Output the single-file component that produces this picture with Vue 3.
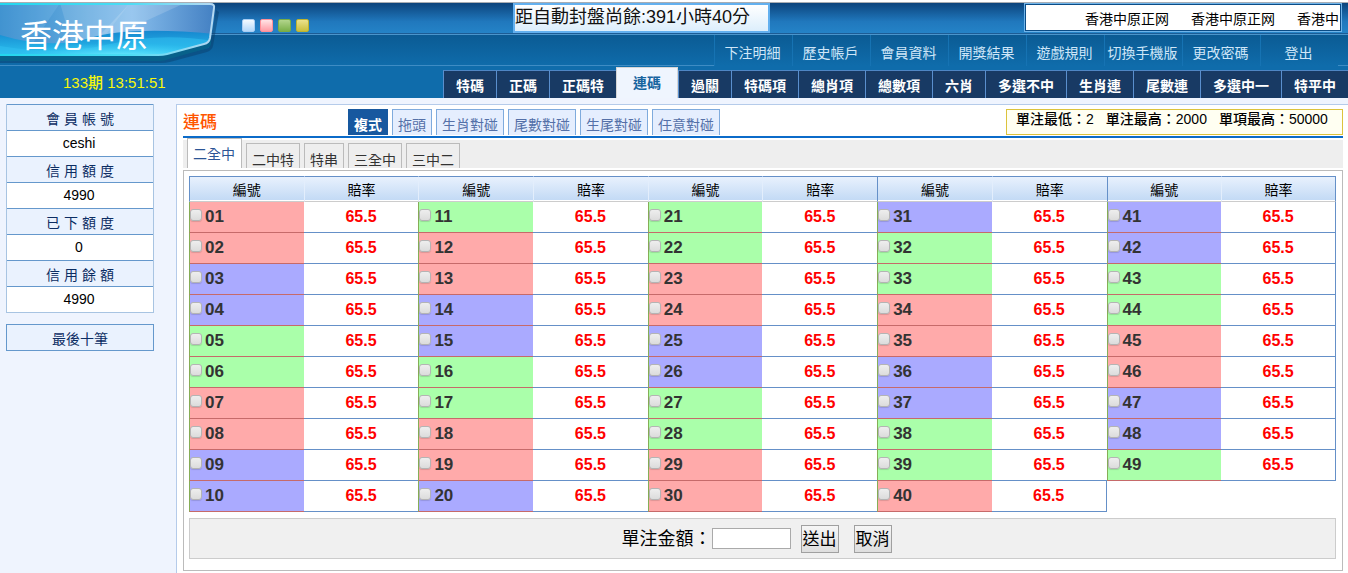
<script setup>
import { ref } from 'vue'

const swatches = ['blue', 'pink', 'green', 'yellow']
const notices = ['香港中原正网', '香港中原正网', '香港中']
const menu = ['下注明細', '歷史帳戶', '會員資料', '開獎結果', '遊戲規則', '切換手機版', '更改密碼', '登出']
const games = ['特碼', '正碼', '正碼特', '連碼', '過關', '特碼項', '總肖項', '總數項', '六肖', '多選不中', '生肖連', '尾數連', '多選中一', '特平中']
const account = [
  ['會員帳號', 'ceshi'],
  ['信用額度', '4990'],
  ['已下額度', '0'],
  ['信用餘額', '4990'],
]
const modes = ['複式', '拖頭', '生肖對碰', '尾數對碰', '生尾對碰', '任意對碰']
const kinds = ['二全中', '二中特', '特串', '三全中', '三中二']
const limits = [['單注最低', '2'], ['單注最高', '2000'], ['單項最高', '50000']]

const waves = 'rrbbggrrbb' + 'grrbbggrrb' + 'ggrrbbggrr' + 'bggrrbbggr' + 'bbggrrbbg'
const rows = Array.from({ length: 10 }, (_, r) =>
  Array.from({ length: 5 }, (_, c) => {
    const n = c * 10 + r + 1
    return n > 49 ? null : { label: String(n).padStart(2, '0'), wave: waves[n - 1], odds: '65.5' }
  })
)

const game = ref('連碼')
const mode = ref('複式')
const kind = ref('二全中')
const picked = ref([])
const amount = ref('')
function reset() {
  picked.value = []
  amount.value = ''
}
</script>

<template>
  <div class="page">
    <header>
      <div class="top-row">
        <div class="swatches">
          <button v-for="s in swatches" :key="s" type="button" :class="s" :aria-label="s"></button>
        </div>
        <div class="countdown">距自動封盤尚餘:391小時40分</div>
        <div class="notice"><span v-for="(n, i) in notices" :key="i">{{ n }}</span></div>
      </div>
      <nav class="menu-row">
        <a v-for="m in menu" :key="m" href="#">{{ m }}</a>
      </nav>
      <div class="game-row">
        <div class="period">133期 13:51:51</div>
        <nav class="games">
          <a v-for="g in games" :key="g" href="#" :class="{ active: g === game }" @click.prevent="game = g">{{ g }}</a>
        </nav>
      </div>
      <div class="logo">
        <svg width="222" height="64" viewBox="0 0 222 64" aria-hidden="true">
          <defs>
            <linearGradient id="face" x1="0" y1="0" x2="1" y2="0">
              <stop offset="0" stop-color="#2e86c8" />
              <stop offset=".35" stop-color="#62a9de" />
              <stop offset=".6" stop-color="#86bdec" />
              <stop offset="1" stop-color="#3f7cc0" />
            </linearGradient>
            <linearGradient id="wave" x1="0" y1="0" x2="0" y2="1">
              <stop offset="0" stop-color="#1688cf" />
              <stop offset="1" stop-color="#2fcdf6" />
            </linearGradient>
            <radialGradient id="glow" cx=".55" cy="1" r=".5">
              <stop offset="0" stop-color="#7ff4ff" />
              <stop offset="1" stop-color="#3fd8fa" stop-opacity="0" />
            </radialGradient>
            <linearGradient id="edge" x1="0" y1="0" x2="1" y2="0">
              <stop offset="0" stop-color="#22d6ee" />
              <stop offset=".6" stop-color="#4cdcf4" />
              <stop offset="1" stop-color="#b5d8f2" />
            </linearGradient>
            <clipPath id="plate"><path d="M0 3H210Q215 3 214 8L210 38Q209 43 204 44L167 54Q163 55 158 55H0Z" /></clipPath>
          </defs>
          <path d="M0 58H165L209 48L216 10L219 12L213 46Q212 50 207 52L170 62Q166 63 161 63H0Z" fill="#093c68" opacity=".45" />
          <path d="M0 50H160L211 38V44Q210 48 205 49L169 59Q165 61 160 61H0Z" fill="#07618a" />
          <g clip-path="url(#plate)">
            <rect width="220" height="60" fill="url(#face)" />
            <path d="M0 3H60L25 55H0Z" fill="#a9d8ff" opacity=".16" />
            <path d="M60 3H130L90 55H75Z" fill="#fff" opacity=".12" />
            <path d="M130 3H185L115 35H100Z" fill="#fff" opacity=".16" />
            <path d="M0 35Q50 50 90 38T215 34V60H0Z" fill="url(#wave)" />
            <path d="M0 46Q60 56 110 44T215 41V60H0Z" fill="#31bff0" opacity=".55" />
            <rect y="28" width="220" height="30" fill="url(#glow)" />
          </g>
          <path d="M0 4H210Q215 4 214 8L210 38Q209 43 204 44L167 54Q163 55 158 55H0" fill="none" stroke="url(#edge)" stroke-width="2" />
        </svg>
        <span>香港中原</span>
      </div>
    </header>

    <div class="body">
      <aside>
        <dl class="account">
          <template v-for="[k, v] in account" :key="k">
            <dt>{{ k }}</dt>
            <dd>{{ v }}</dd>
          </template>
        </dl>
        <a class="last-ten" href="#">最後十筆</a>
      </aside>

      <main>
        <div class="title-row">
          <h1>連碼</h1>
          <div class="modes">
            <a v-for="m in modes" :key="m" href="#" :class="{ active: m === mode }" @click.prevent="mode = m">{{ m }}</a>
          </div>
          <div class="limits">
            <span v-for="[k, v] in limits" :key="k"><b>{{ k }}：</b>{{ v }}</span>
          </div>
        </div>
        <div class="kinds">
          <a v-for="k in kinds" :key="k" href="#" :class="{ active: k === kind }" @click.prevent="kind = k">{{ k }}</a>
        </div>
        <form class="panel" @submit.prevent>
          <table>
            <thead>
              <tr>
                <template v-for="c in 5" :key="c">
                  <th scope="col">編號</th>
                  <th scope="col">賠率</th>
                </template>
              </tr>
            </thead>
            <tbody>
              <tr v-for="(row, r) in rows" :key="r">
                <template v-for="(cell, c) in row" :key="c">
                  <template v-if="cell">
                    <td class="num" :class="cell.wave">
                      <label><input v-model="picked" type="checkbox" :value="cell.label">{{ cell.label }}</label>
                    </td>
                    <td class="odds" :class="{ end: c === 4 || (c === 3 && r === 9) }">{{ cell.odds }}</td>
                  </template>
                  <td v-else colspan="2"></td>
                </template>
              </tr>
            </tbody>
          </table>
          <div class="bet">
            <label for="amount">單注金額：</label>
            <input id="amount" v-model="amount" type="text">
            <button type="submit">送出</button>
            <button type="button" @click="reset">取消</button>
          </div>
        </form>
      </main>
    </div>
  </div>
</template>

<style>
body {
  margin: 0;
  background: #eff4fe;
}
</style>

<style scoped>
.page {
  display: flex;
  flex-direction: column;
  min-height: 100vh;
  overflow: hidden;
  font: 14px/20px "Liberation Sans", "Noto Sans CJK TC", sans-serif;
  color: #000;
}
.page * {
  box-sizing: border-box;
}
a {
  text-decoration: none;
  white-space: nowrap;
}
header {
  position: relative;
  background: #0f6cab;
  border-top: 2px solid #fff;
}
.top-row {
  display: flex;
  height: 33px;
  border-top: 1px solid #a9adb3;
  border-bottom: 1px solid #4b95cc;
  box-shadow: inset 0 -1px #1c5c95;
  background: linear-gradient(#0c447c, #2078bd 60%, #2584c8);
  padding: 0 6px 0 242px;
}
.swatches {
  display: flex;
  gap: 5px;
  padding-top: 16px;
  flex: 1;
}
.swatches button {
  width: 13px;
  height: 13px;
  padding: 0;
  border-width: 1px;
  border-style: solid;
  border-radius: 2px;
}
.swatches .blue { background: linear-gradient(#f4faff, #b4d8fa); border-color: #a9cdf3; }
.swatches .pink { background: linear-gradient(#ffe4e6, #ff9ba4); border-color: #ff8f98; }
.swatches .green { background: linear-gradient(#b2d58c, #7ab04a); border-color: #79ac43; }
.swatches .yellow { background: linear-gradient(#ebe28d, #c9bf3d); border-color: #bdb32e; }
.countdown {
  width: 257px;
  height: 30px;
  border: 2px solid #63b0ef;
  background: linear-gradient(#fff, #dceefc);
  font-size: 18px;
  line-height: 25px;
  color: #111;
  white-space: nowrap;
}
.notice {
  display: flex;
  gap: 22px;
  width: 318px;
  height: 29px;
  margin-left: 254px;
  padding-left: 60px;
  border: 1px solid #6fb4ea;
  background: #fff;
  box-shadow: inset 0 0 0 1px #0b4c86;
  line-height: 30px;
  white-space: nowrap;
}
.menu-row {
  display: flex;
  justify-content: flex-end;
  height: 31px;
  padding-right: 10px;
  background: linear-gradient(#0b5b94, #0f6cab);
  box-shadow: inset 0 -1px #3e8cc4;
}
.menu-row a {
  width: 78px;
  padding: 8px 2px 0 0;
  color: #cfe6f8;
  text-align: center;
  background: linear-gradient(#0b5b94, #0f6cab);
  border-left: 1px solid #1673b3;
}
.game-row {
  display: flex;
  justify-content: space-between;
  height: 32px;
}
.period {
  padding: 7px 0 0 63px;
  font-size: 15px;
  font-weight: 500;
  color: #f7f70c;
}
.games {
  display: flex;
  align-items: flex-end;
}
.games a {
  height: 28px;
  padding: 5px 12px 0;
  border-top: 1px solid #4f86c4;
  border-left: 1px solid #5a8fce;
  background: #183a64;
  color: #fff;
  font-weight: bold;
}
.games a.active {
  height: 31px;
  padding: 5px 16px 0;
  border: 1px solid #d5d5d5;
  border-bottom: 0;
  background: #eff5fe;
  color: #17649f;
}
.logo {
  position: absolute;
  top: -2px;
  left: 0;
}
.logo svg {
  display: block;
}
.logo span {
  position: absolute;
  top: 16px;
  left: 20px;
  font-size: 32px;
  line-height: 40px;
  color: #fff;
  white-space: nowrap;
}
.body {
  display: flex;
  flex: 1;
  padding-top: 6px;
}
aside {
  flex: none;
  width: 154px;
  margin-right: 22px;
  padding-left: 6px;
}
.account {
  margin: 0 0 11px;
  border: 1px solid #a8c4e2;
  border-top: 0;
  text-align: center;
}
.account dt,
.account dd {
  height: 26px;
  margin: 0;
  border-top: 1px solid #6598cc;
}
.account dt {
  padding-top: 4px;
  background: #eaf2fe;
  color: #0c2d63;
  letter-spacing: 4px;
  text-indent: 4px;
}
.account dd {
  padding: 2px 2px 0 0;
  background: #fff;
}
.last-ten {
  display: block;
  height: 27px;
  padding-top: 4px;
  border: 1px solid #6598cc;
  background: #eaf2fe;
  color: #0c2d63;
  text-align: center;
}
main {
  flex: 1;
  min-width: 0;
  padding: 4px 5px 2px 6px;
  border-top: 1px solid #b5cbea;
  border-left: 1px solid #b5cbea;
  background: #fff;
}
.title-row {
  display: flex;
  align-items: flex-start;
  height: 29px;
  border-bottom: 2px solid #0b6bc9;
}
h1 {
  width: 165px;
  margin: 0;
  padding-top: 4px;
  font-size: 17px;
  line-height: 20px;
  font-weight: 500;
  color: #ff5500;
}
.modes {
  display: flex;
  flex: 1;
  gap: 4px;
}
.modes a {
  height: 26px;
  padding: 5px 5px 0;
  border: 1px solid #7fabdd;
  border-bottom: 0;
  background: #e5eefe;
  color: #5470a8;
}
.modes a.active {
  border-color: #17589f;
  background: #17589f;
  color: #fff;
  font-weight: bold;
}
.limits {
  display: flex;
  gap: 12px;
  width: 337px;
  height: 26px;
  padding-left: 9px;
  border: 1px solid #dcc33c;
  background: #fffff2;
  line-height: 18px;
  white-space: nowrap;
}
.limits b {
  font-weight: 500;
}
.kinds {
  display: flex;
  align-items: flex-end;
  gap: 4px;
  height: 32px;
  padding: 0 4px 2px;
  background: linear-gradient(#fff 2px, #eee 2px, #eee 30px, #fff 30px);
}
.kinds a {
  height: 25px;
  padding: 6px 5px 0;
  border: 1px solid #bbb;
  border-bottom: 0;
  color: #333;
}
.kinds a.active {
  height: 30px;
  padding: 5px 6px 0 5px;
  background: #fff;
  color: #2c5596;
}
.panel {
  padding: 5px 6px 11px 5px;
  border: 1px solid #bbb;
}
table {
  width: 100%;
  table-layout: fixed;
  border-collapse: separate;
  border-spacing: 0;
}
th {
  height: 26px;
  padding: 1px 0 0;
  border-top: 1px solid #6590c8;
  border-bottom: 1px solid #ccc;
  border-left: 1px solid #e3eefc;
  background: linear-gradient(#e8f1fd, #c3daf5 23px, #fff 23px);
  font-weight: normal;
}
th:nth-child(1),
th:nth-child(7),
th:nth-child(9) {
  border-left-color: #6590c8;
}
th:last-child {
  border-right: 1px solid #6590c8;
}
td {
  height: 31px;
  padding: 0;
}
.num {
  border-left: 1px solid #86ae56;
  border-bottom: 1px solid #c66a6a;
}
.num.r { background: #faa; }
.num.g { background: #afa; }
.num.b { background: #aaf; }
.num label {
  display: flex;
  align-items: center;
  gap: 3px;
  height: 30px;
  font-size: 17px;
  font-weight: bold;
  color: #333;
}
.num input {
  appearance: none;
  width: 12px;
  height: 12px;
  margin: 0 0 4px;
  border: 1px solid #b4b4b4;
  border-radius: 3px;
  background: linear-gradient(#eee, #dcdcdc);
  box-shadow: 0 1px 1px #0002;
}
.num input:checked {
  background: #4a7ac0;
}
.odds {
  padding-bottom: 1px;
  border-bottom: 1px solid #6590c8;
  font-size: 16px;
  font-weight: bold;
  color: #f00;
  text-align: center;
}
.odds.end {
  border-right: 1px solid #6590c8;
}
.bet {
  display: flex;
  align-items: center;
  justify-content: center;
  height: 41px;
  margin-top: 6px;
  padding-right: 12px;
  border: 1px solid #ccc;
  background: #f0f0f0;
  font-size: 18px;
}
.bet input {
  width: 79px;
  height: 21px;
  margin-right: 10px;
  padding: 0 2px;
  border: 1px solid #aaa;
  background: #fff;
  font: inherit;
}
.bet button {
  width: 38px;
  height: 28px;
  padding: 2px 0 0;
  border: 1px solid #a0a0a0;
  background: linear-gradient(#f6f6f6, #dedede);
  color: #000;
  font: inherit;
  font-size: 17px;
  white-space: nowrap;
}
.bet button + button {
  margin-left: 15px;
}
</style>
